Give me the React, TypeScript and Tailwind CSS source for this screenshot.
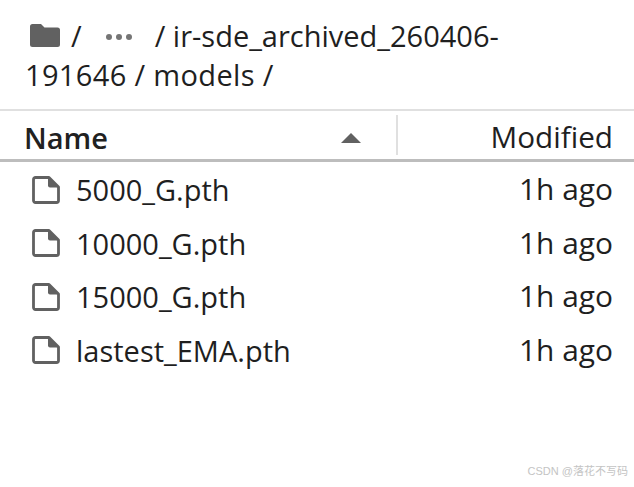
import React from 'react';

const files = ['5000_G.pth', '10000_G.pth', '15000_G.pth', 'lastest_EMA.pth'];

const FileIcon = () => (
  <svg width="28" height="28" viewBox="0 0 28 28" fill="none" className="shrink-0">
    <path
      d="M1.500 3.500 a2 2 0 0 1 2-2 h13.500 l9.500 9.500 v13.500 a2 2 0 0 1-2 2 h-21 a2 2 0 0 1-2-2 z"
      stroke="#616161"
      strokeWidth="2.800"
      strokeLinejoin="round"
    />
    <path d="M16 1.500 v8 a2 2 0 0 0 2 2 h8.500 z" fill="#616161" />
  </svg>
);

const App = () => {
  return (
    <div className="relative w-[634px] h-[487px] overflow-hidden bg-white text-[#1f1f1f] font-['Open_Sans','Noto_Sans',sans-serif] text-[29px]">
      {/* breadcrumbs */}
      <div className="h-[109px] pt-[16px] pl-[25px] pr-[24px] leading-[39px]">
        <div className="flex items-center h-[39px] whitespace-nowrap">
          <svg width="30" height="23" viewBox="0 0 30 23" className="ml-[5px] shrink-0">
            <path
              d="M2.500 0 h8.500 l3.500 3.500 h13 a2.500 2.500 0 0 1 2.500 2.500 v14.500 a2.500 2.500 0 0 1-2.500 2.500 h-25 a2.500 2.500 0 0 1-2.500-2.500 v-18 a2.500 2.500 0 0 1 2.500-2.500 z"
              fill="#616161"
            />
          </svg>
          <span className="ml-[11px]">/</span>
          <div className="flex items-center gap-[4px] ml-[24px] mt-[2px]">
            <span className="w-[6px] h-[6px] rounded-full bg-[#757575]" />
            <span className="w-[6px] h-[6px] rounded-full bg-[#757575]" />
            <span className="w-[6px] h-[6px] rounded-full bg-[#757575]" />
          </div>
          <span className="ml-[23px]">/ ir-sde_archived_260406-</span>
        </div>
        <div className="tracking-[0.35px]">191646 / models /</div>
      </div>

      {/* header */}
      <div className="flex items-center h-[53px] pl-[24px] pr-[21px] pt-[5px] border-t-2 border-b-[3px] border-t-[#e0e0e0] border-b-[#bdbdbd]">
        <span className="font-semibold text-[#212121]">Name</span>
        <div className="ml-auto w-0 h-0 border-l-[10px] border-r-[10px] border-b-[10px] border-l-transparent border-r-transparent border-b-[#616161]" />
        <div className="w-[2px] h-[40px] -mt-[5px] bg-[#e0e0e0] mr-[92px] ml-[35px]" />
        <span className="text-[29.700px]">Modified</span>
      </div>

      {/* file rows */}
      <div className="pt-[1px] flex flex-col">
        {files.map((name) => (
          <div key={name} className="flex items-center h-[53.500px] pl-[32px] pr-[21px]">
            <FileIcon />
            <span className="ml-[16px]">{name}</span>
            <span className="ml-auto text-[29.900px]">1h ago</span>
          </div>
        ))}
      </div>

      {/* watermark */}
      <div className="absolute right-[6px] bottom-[9px] text-[11px] leading-[14px] text-[#c4c4c4] font-['Liberation_Sans','Noto_Sans_CJK_SC',sans-serif]">
        CSDN @落花不写码
      </div>
    </div>
  );
};

export default App;
